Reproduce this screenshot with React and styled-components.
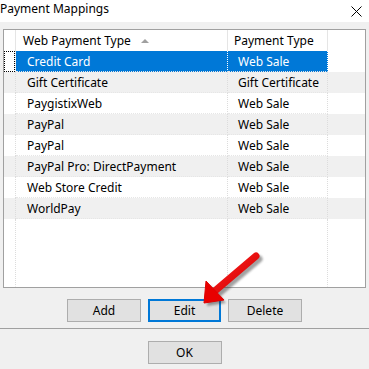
import React from 'react';
import styled, { createGlobalStyle } from 'styled-components';

const Global = createGlobalStyle`
body {
margin:0;
background:#f0f0f0;
}
`

const Window = styled.div`
position: relative;
width:369px;
height:369px;
background:#f0f0f0;
font-family: "Noto Sans", "Liberation Sans", sans-serif;
font-size:12px;
color:#000;
overflow:hidden;
display:flex;
flex-direction:column;
`
const TitleBar = styled.div`
height:22px;
background:#fff;
display:flex;
align-items:center;
justify-content:space-between;
padding:0 7px 0 0;
`
const Title = styled.span`
font-size:12px;
line-height:22px;
margin-top:-4px;
`
const Close = styled.svg`
width:11px;
height:11px;
margin-top:1px;
`
const Body = styled.div`
padding:7px 3px 0 3px;
`
const GridBox = styled.div`
height:257px;
border:1px solid #a0a0a0;
background:#fff;
display:flex;
flex-direction:column;
`
const Row = styled.div`
display:grid;
grid-template-columns:12px 212px 100px 1fr;
height:${p => p.h || 21}px;
flex:${p => (p.fill ? 1 : 'none')};
background:${p => (p.alt ? '#f0f0f0' : '#fff')};
`
const HeadCell = styled.div`
display:flex;
align-items:center;
padding-left:${p => p.pad || 0}px;
border-right:1px solid ${p => (p.last ? 'transparent' : '#e5e5e5')};
white-space:nowrap;
`
const Cell = styled.div`
display:flex;
align-items:center;
padding-left:${p => p.pad || 0}px;
padding-top:1px;
white-space:nowrap;
border-right:1px dotted ${p => (p.sel ? '#fff' : p.last ? 'transparent' : '#dcdcdc')};
border-bottom:1px dotted ${p => (p.fill || p.last ? 'transparent' : '#e6e6e6')};
background:${p => (p.sel ? '#0078d7' : 'transparent')};
color:${p => (p.sel ? '#fff' : '#000')};
`
const RowHead = styled.div`
position:relative;
border-right:1px dotted #dcdcdc;
background:${p => (p.sel ? '#fff' : 'transparent')};
`
const Focus = styled.div`
position:absolute;
left:0;
top:0;
right:0;
bottom:0;
border:1px dotted #000;
`
const SortArrow = styled.span`
display:inline-block;
width:0;
height:0;
margin-left:10px;
border-left:4.5px solid transparent;
border-right:4.5px solid transparent;
border-bottom:4.5px solid #a0a0a0;
`
const Buttons = styled.div`
display:flex;
justify-content:center;
gap:7px;
padding:11px 0 6px 0;
border-bottom:1px solid #a0a0a0;
`
const Button = styled.button`
width:${p => (p.def ? 73 : 74)}px;
height:23px;
box-sizing:border-box;
background:#e1e1e1;
border:${p => (p.def ? '2px solid #0078d7' : '1px solid #adadad')};
font-family: "Noto Sans", "Liberation Sans", sans-serif;
font-size:12px;
color:#000;
padding:0;
`
const Footer = styled.div`
display:flex;
justify-content:center;
padding-top:12px;
`
const Arrow = styled.svg`
position:absolute;
left:190px;
top:240px;
width:90px;
height:80px;
`

const rows = [
  ['Credit Card', 'Web Sale'],
  ['Gift Certificate', 'Gift Certificate'],
  ['PaygistixWeb', 'Web Sale'],
  ['PayPal', 'Web Sale'],
  ['PayPal', 'Web Sale'],
  ['PayPal Pro: DirectPayment', 'Web Sale'],
  ['Web Store Credit', 'Web Sale'],
  ['WorldPay', 'Web Sale'],
]

const App = () => {
  return (
    <Window>
      <Global />
      <TitleBar>
        <Title>Payment Mappings</Title>
        <Close viewBox="0 0 11 11">
          <path d="M0.5 0.5 L10.5 10.5 M10.5 0.5 L0.5 10.5" stroke="#000" strokeWidth="1" />
        </Close>
      </TitleBar>
      <Body>
        <GridBox>
          <Row h={21}>
            <HeadCell />
            <HeadCell pad={7}>Web Payment Type<SortArrow /></HeadCell>
            <HeadCell pad={6}>Payment Type</HeadCell>
            <HeadCell last />
          </Row>
          {rows.map((r, i) => (
            <Row key={i} alt={i % 2 === 1}>
              <RowHead sel={i === 0}>{i === 0 && <Focus />}</RowHead>
              <Cell pad={11} sel={i === 0}>{r[0]}</Cell>
              <Cell pad={10} sel={i === 0}>{r[1]}</Cell>
              <Cell last />
            </Row>
          ))}
          <Row fill>
            <Cell fill />
            <Cell fill />
            <Cell fill />
            <Cell fill last />
          </Row>
        </GridBox>
      </Body>
      <Buttons>
        <Button>Add</Button>
        <Button def>Edit</Button>
        <Button>Delete</Button>
      </Buttons>
      <Footer>
        <Button>OK</Button>
      </Footer>
      <Arrow viewBox="190 240 90 80">
        <defs>
          <linearGradient id="red" x1="0" y1="0" x2="1" y2="1">
            <stop offset="0" stopColor="#ff2020" />
            <stop offset="1" stopColor="#d00000" />
          </linearGradient>
          <filter id="blur" x="-20%" y="-20%" width="140%" height="140%">
            <feGaussianBlur stdDeviation="1.2" />
          </filter>
        </defs>
        <g transform="translate(3 3)" filter="url(#blur)" opacity="0.45">
          <line x1="256" y1="256" x2="216" y2="290" stroke="#333" strokeWidth="7" strokeLinecap="round" />
          <polygon points="204,303 207,282 223,300" fill="#333" />
        </g>
        <line x1="256" y1="256" x2="216" y2="290" stroke="url(#red)" strokeWidth="7" strokeLinecap="round" />
        <polygon points="204,303 206,281 224,300" fill="#e80000" stroke="#e00000" strokeWidth="1" strokeLinejoin="round" />
      </Arrow>
    </Window>
  );
};

export default App;
